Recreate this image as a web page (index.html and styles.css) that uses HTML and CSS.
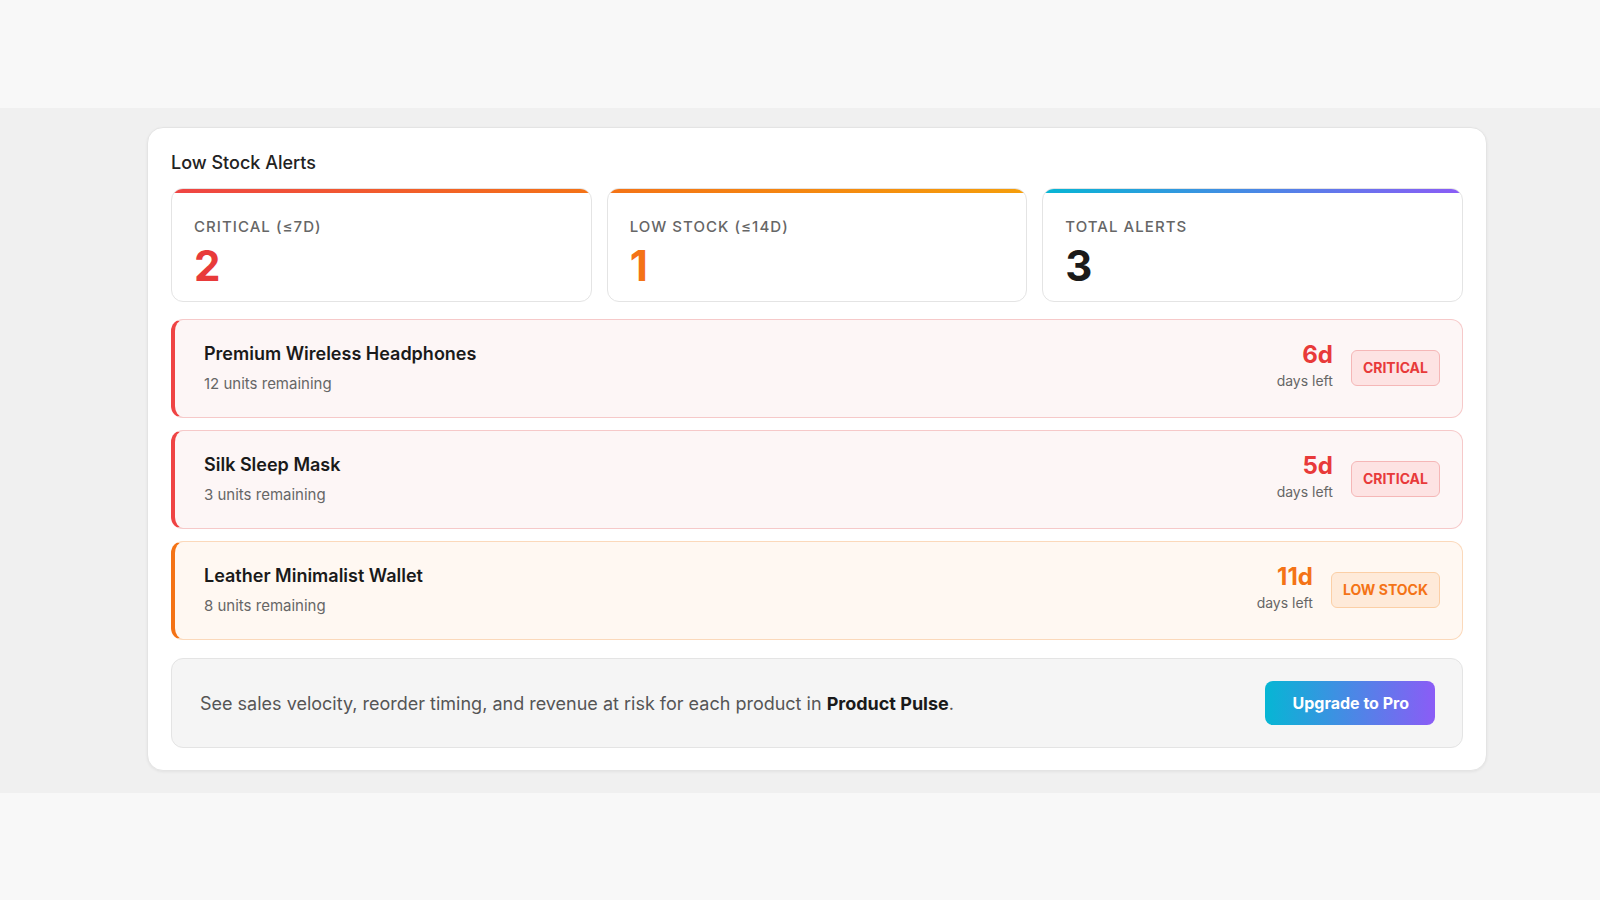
FILE: index.html
```html
<!DOCTYPE html>
<html lang="en">
<head>
    <meta charset="UTF-8">
    <meta name="viewport" content="width=device-width, initial-scale=1.0">
    <title>Low Stock Alerts</title>
    <link rel="stylesheet" href="styles.css">
</head>
<body>
    <div class="page-top"></div>

    <section class="widget-area">
        <div class="alerts-panel">
            <h2 class="panel-title">Low Stock Alerts</h2>

            <div class="stat-grid">
                <div class="stat-card critical">
                    <div class="stat-label">Critical (≤7d)</div>
                    <div class="stat-value">2</div>
                </div>
                <div class="stat-card low">
                    <div class="stat-label">Low Stock (≤14d)</div>
                    <div class="stat-value">1</div>
                </div>
                <div class="stat-card total">
                    <div class="stat-label">Total Alerts</div>
                    <div class="stat-value">3</div>
                </div>
            </div>

            <div class="alert-list">
                <div class="alert-row critical">
                    <div class="product-info">
                        <div class="product-name">Premium Wireless Headphones</div>
                        <div class="product-units">12 units remaining</div>
                    </div>
                    <div class="alert-meta">
                        <div class="days-left">
                            <span class="days-value">6d</span>
                            <span class="days-label">days left</span>
                        </div>
                        <span class="status-badge">Critical</span>
                    </div>
                </div>

                <div class="alert-row critical">
                    <div class="product-info">
                        <div class="product-name">Silk Sleep Mask</div>
                        <div class="product-units">3 units remaining</div>
                    </div>
                    <div class="alert-meta">
                        <div class="days-left">
                            <span class="days-value">5d</span>
                            <span class="days-label">days left</span>
                        </div>
                        <span class="status-badge">Critical</span>
                    </div>
                </div>

                <div class="alert-row low">
                    <div class="product-info">
                        <div class="product-name">Leather Minimalist Wallet</div>
                        <div class="product-units">8 units remaining</div>
                    </div>
                    <div class="alert-meta">
                        <div class="days-left">
                            <span class="days-value">11d</span>
                            <span class="days-label">days left</span>
                        </div>
                        <span class="status-badge">Low Stock</span>
                    </div>
                </div>
            </div>

            <div class="upsell">
                <p class="upsell-text">See sales velocity, reorder timing, and revenue at risk for each product in <strong>Product Pulse</strong>.</p>
                <a href="#" class="upgrade-button">Upgrade to Pro</a>
            </div>
        </div>
    </section>
</body>
</html>
```

FILE: styles.css
```css
:root {
    /* Colors */
    --red: #e83a3a;
    --red-bar: #ef4444;
    --orange: #f47316;
    --amber: #f59e0b;
    --cyan: #06b6d4;
    --violet: #8b5cf6;
    --text-primary: #1a1a1a;
    --text-secondary: #666666;
    --page-bg: #f8f8f8;
    --area-bg: #f0f0f0;
    --border-color: #e4e4e4;

    /* Typography */
    --font-family-base: Inter, "Noto Sans", "Liberation Sans", sans-serif;

    /* Border radius */
    --radius-sm: 6px;
    --radius-md: 8px;
    --radius-lg: 12px;
    --radius-xl: 16px;
}

* {
    box-sizing: border-box;
}

body {
    margin: 0;
    font-family: var(--font-family-base);
    color: var(--text-primary);
    background-color: var(--page-bg);
    min-height: 100vh;
}

.page-top {
    height: 108px;
}

.widget-area {
    background-color: var(--area-bg);
    padding: 19px 0 22px 147px;
}

.alerts-panel {
    width: 1340px;
    background-color: #fff;
    border: 1px solid var(--border-color);
    border-radius: var(--radius-xl);
    box-shadow: 0 1px 3px rgba(0, 0, 0, 0.06);
    padding: 24px 23px 22px;
}

.panel-title {
    margin: 0 0 15px;
    font-size: 18px;
    font-weight: 500;
    color: #222;
}

/* Summary cards */
.stat-grid {
    display: grid;
    grid-template-columns: repeat(3, 1fr);
    gap: 15px;
    margin-bottom: 17px;
}

.stat-card {
    position: relative;
    overflow: hidden;
    border: 1px solid var(--border-color);
    border-radius: var(--radius-lg);
    padding: 28px 22px 10px;
}

.stat-card::before {
    content: "";
    position: absolute;
    top: 0;
    left: 0;
    right: 0;
    height: 4px;
}

.stat-card.critical::before {
    background: linear-gradient(90deg, var(--red-bar), var(--orange));
}

.stat-card.low::before {
    background: linear-gradient(90deg, var(--orange), var(--amber));
}

.stat-card.total::before {
    background: linear-gradient(90deg, var(--cyan), var(--violet));
}

.stat-label {
    font-size: 15px;
    font-weight: 500;
    letter-spacing: 0.07em;
    text-transform: uppercase;
    color: var(--text-secondary);
}

.stat-value {
    margin-top: 5px;
    font-size: 42px;
    font-weight: 700;
    line-height: 1.2;
}

.stat-card.critical .stat-value {
    color: var(--red);
}

.stat-card.low .stat-value {
    color: var(--orange);
}

/* Product rows */
.alert-list {
    display: flex;
    flex-direction: column;
    gap: 12px;
    margin-bottom: 18px;
}

.alert-row {
    display: flex;
    justify-content: space-between;
    align-items: center;
    border: 1px solid;
    border-left-width: 4px;
    border-radius: var(--radius-lg);
    padding: 23px 22px 24px 29px;
}

.alert-row.critical {
    background-color: #fdf6f6;
    border-color: #f6c9c9;
    border-left-color: var(--red-bar);
}

.alert-row.low {
    background-color: #fff8f2;
    border-color: #fbd9bb;
    border-left-color: var(--orange);
}

.product-name {
    font-size: 18px;
    font-weight: 600;
}

.product-units {
    margin-top: 10px;
    font-size: 15px;
    color: var(--text-secondary);
}

.alert-meta {
    display: flex;
    align-items: center;
    gap: 18px;
}

.days-left {
    display: flex;
    flex-direction: column;
    align-items: flex-end;
    margin-top: -6px;
}

.days-value {
    font-size: 24px;
    font-weight: 700;
    line-height: 1.1;
}

.days-label {
    margin-top: 4px;
    font-size: 14px;
    color: var(--text-secondary);
}

.status-badge {
    padding: 8px 11px 9px;
    border: 1px solid;
    border-radius: var(--radius-sm);
    font-size: 14px;
    font-weight: 700;
    text-transform: uppercase;
}

.alert-row.critical .days-value,
.alert-row.critical .status-badge {
    color: var(--red);
}

.alert-row.critical .status-badge {
    background-color: #fde3e3;
    border-color: #f5b7b7;
}

.alert-row.low .days-value,
.alert-row.low .status-badge {
    color: var(--orange);
}

.alert-row.low .status-badge {
    background-color: #feead9;
    border-color: #fbcfa6;
}

/* Upgrade prompt */
.upsell {
    display: flex;
    justify-content: space-between;
    align-items: center;
    background-color: #f5f5f5;
    border: 1px solid var(--border-color);
    border-radius: var(--radius-lg);
    padding: 22px 27px 22px 28px;
}

.upsell-text {
    margin: 0;
    font-size: 18px;
    color: #555;
}

.upsell-text strong {
    font-weight: 700;
    color: var(--text-primary);
}

.upgrade-button {
    display: inline-block;
    padding: 12px 26px 12px 27px;
    border-radius: var(--radius-md);
    background: linear-gradient(90deg, var(--cyan), var(--violet));
    color: #fff;
    font-size: 16px;
    font-weight: 700;
    text-decoration: none;
}
```
